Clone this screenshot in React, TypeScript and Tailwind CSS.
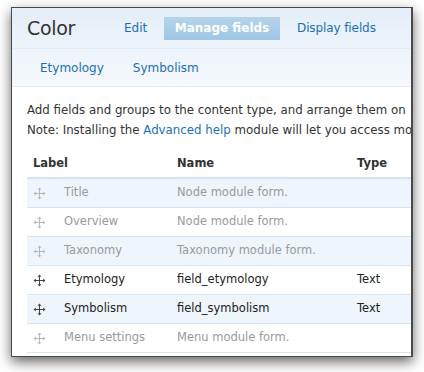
import React from "react";

function DragIcon({ dim }: { dim: boolean }) {
  const c = dim ? "#b8b8b8" : "#444";
  return (
    <svg width="13" height="13" viewBox="0 0 13 13" className="shrink-0">
      <path d="M6.5 1.5 V11.5 M1.5 6.5 H11.5" stroke={c} strokeWidth="1" fill="none" />
      <path d="M6.5 0.5 L4.5 2.8 H8.5 Z M6.5 12.5 L4.5 10.2 H8.5 Z M0.5 6.5 L2.8 4.5 V8.5 Z M12.5 6.5 L10.2 4.5 V8.5 Z" fill={c} />
    </svg>
  );
}

const rows = [
  { label: "Title", name: "Node module form.", type: "", dim: true },
  { label: "Overview", name: "Node module form.", type: "", dim: true },
  { label: "Taxonomy", name: "Taxonomy module form.", type: "", dim: true },
  { label: "Etymology", name: "field_etymology", type: "Text", dim: false },
  { label: "Symbolism", name: "field_symbolism", type: "Text", dim: false },
  { label: "Menu settings", name: "Menu module form.", type: "", dim: true },
];

export default function App() {
  return (
    <div
      className="w-[424px] h-[372px] bg-white overflow-hidden pl-[11px] pt-[7px]"
      style={{ fontFamily: '"DejaVu Sans", Verdana, sans-serif' }}
    >
      <div className="w-[402px] h-[350px] border border-r-2 border-[#4a4a4a] overflow-hidden bg-white shadow-[0_5px_12px_rgba(0,0,0,0.6)]">
        <div className="bg-gradient-to-b from-[#e4eef8] to-[#f6f9fd]">
          <div className="h-[41px] flex items-center pl-[15px] border-b border-[#e2eaf2]">
            <div className="text-[19px] text-[#333] tracking-[-0.3px] w-[97px]">Color</div>
            <div className="text-[12px] text-[#1b6fb5] w-[40px]">Edit</div>
            <div className="h-[23px] w-[116px] flex items-center justify-center bg-gradient-to-b from-[#b5d4ec] to-[#9ec6e4] text-white font-bold text-[12px]">
              Manage fields
            </div>
            <div className="text-[12px] text-[#1b6fb5] ml-[17px] tracking-[-0.1px]">Display fields</div>
          </div>
          <div className="h-[38px] flex items-center pl-[28px] gap-[29px] text-[12px] text-[#1b6fb5] border-b border-[#e6ecf2]">
            <span>Etymology</span>
            <span>Symbolism</span>
          </div>
        </div>
        <div className="pl-[15px] pt-[13px] text-[11.8px] text-[#333] whitespace-nowrap leading-[20px]">
          <div>Add fields and groups to the content type, and arrange them on</div>
          <div>
            Note: Installing the <span className="text-[#1b6fb5]">Advanced help</span> module will let you access more
          </div>
        </div>
        <div className="ml-[15px] mt-[11px] w-[420px] text-[11.5px] whitespace-nowrap">
          <div className="h-[28px] flex items-center font-bold text-[#333] border-b-2 border-[#d3e4f3]">
            <div className="pl-[6px] w-[150px]">Label</div>
            <div className="w-[180px]">Name</div>
            <div>Type</div>
          </div>
          {rows.map((r, i) => (
            <div
              key={r.label}
              className={`h-[29px] flex items-center border-b border-[#d6e5f2] ${i % 2 === 0 ? "bg-[#eef5fc]" : "bg-white"} ${r.dim ? "text-[#9a9a9a]" : "text-[#222]"}`}
            >
              <div className="w-[150px] flex items-center">
                <div className="w-[37px] pl-[6px] flex items-center">
                  <DragIcon dim={r.dim} />
                </div>
                <span>{r.label}</span>
              </div>
              <div className="w-[180px]">{r.name}</div>
              <div>{r.type}</div>
            </div>
          ))}
        </div>
      </div>
    </div>
  );
}
